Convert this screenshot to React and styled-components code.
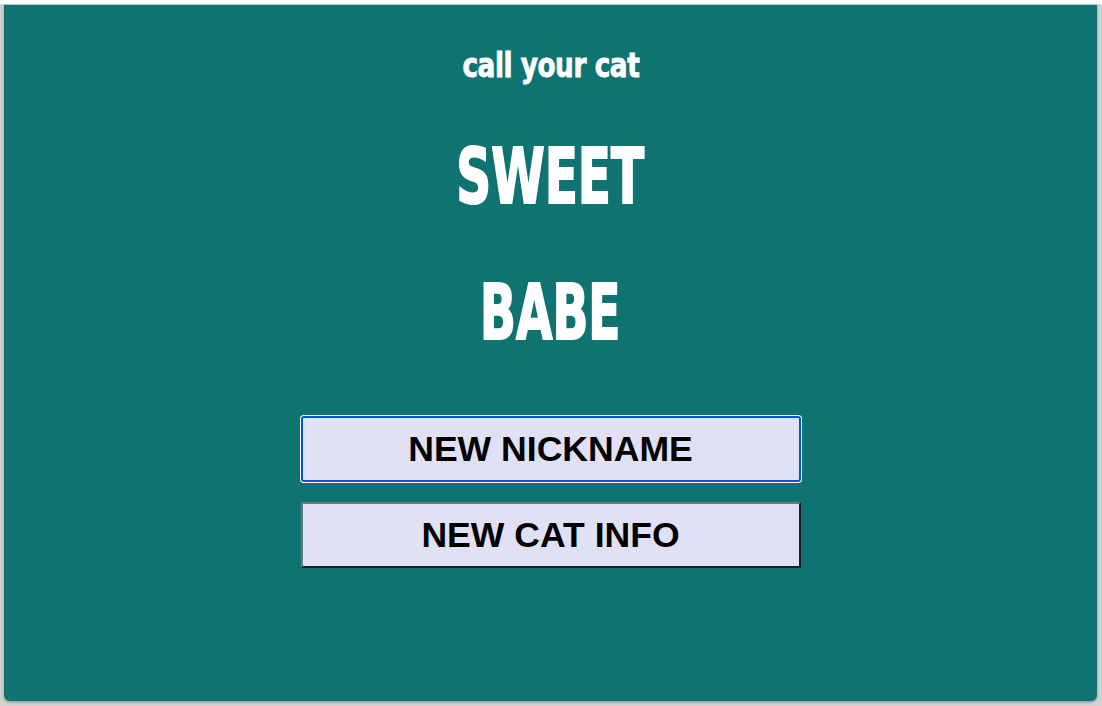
import React from 'react';
import styled, { createGlobalStyle } from 'styled-components';

const GlobalStyle = createGlobalStyle`
  html, body {
    margin: 0;
    padding: 0;
    height: 100%;
  }
  body {
    background-color: #d2d2d2;
  }
  #root {
    height: 100%;
  }
`;

const Page = styled.div`
  box-sizing: border-box;
  height: 100%;
  border-top: 4px solid #ffffff;
  padding: 1px 5px 5px 4px;
  display: flex;
`;

const Panel = styled.main`
  flex: 1;
  background-color: #0f7471;
  border-radius: 0 0 6px 6px;
  box-shadow: 0 1px 3px rgba(0, 0, 0, 0.35);
  display: flex;
  flex-direction: column;
  align-items: center;
  padding-top: 40px;
  font-family: "DejaVu Sans Condensed", "DejaVu Sans", sans-serif;
  font-stretch: condensed;
  color: #ffffff;
`;

const Subtitle = styled.h2`
  margin: 0;
  font-size: 34px;
  line-height: 40px;
  font-weight: bold;
  letter-spacing: -0.5px;
  -webkit-text-stroke: 0.8px #ffffff;
  transform: scaleX(0.86);
`;

const Names = styled.div`
  margin-top: 25px;
  display: flex;
  flex-direction: column;
  align-items: center;
`;

const Word = styled.h1`
  margin: 0;
  font-size: 77px;
  line-height: 136px;
  font-weight: bold;
  -webkit-text-stroke: 2px #ffffff;
  transform: translateY(-1px) scaleX(${(p) => p.squeeze});
`;

const ButtonStack = styled.div`
  margin-top: 34px;
  display: flex;
  flex-direction: column;
  gap: 20px;
`;

const Button = styled.button`
  box-sizing: border-box;
  width: 500px;
  height: 66px;
  background-color: #e1e1f6;
  font-family: "Liberation Sans", Arial, sans-serif;
  font-weight: bold;
  font-size: 35.6px;
  color: #000000;
  cursor: pointer;
  border: 2px solid;
  border-color: #767676 #1e1e1e #1e1e1e #767676;
  border-radius: 0;
  outline: none;

  &.focused {
    border-color: #0059c1;
    border-radius: 3px;
    box-shadow: 0 0 0 1px #ffffff;
  }
`;

const App = () => {
  return (
    <>
      <GlobalStyle />
      <Page>
        <Panel>
          <Subtitle>call your cat</Subtitle>
          <Names>
            <Word squeeze={0.7}>SWEET</Word>
            <Word squeeze={0.68}>BABE</Word>
          </Names>
          <ButtonStack>
            <Button className="focused">NEW NICKNAME</Button>
            <Button>NEW CAT INFO</Button>
          </ButtonStack>
        </Panel>
      </Page>
    </>
  );
};

export default App;
